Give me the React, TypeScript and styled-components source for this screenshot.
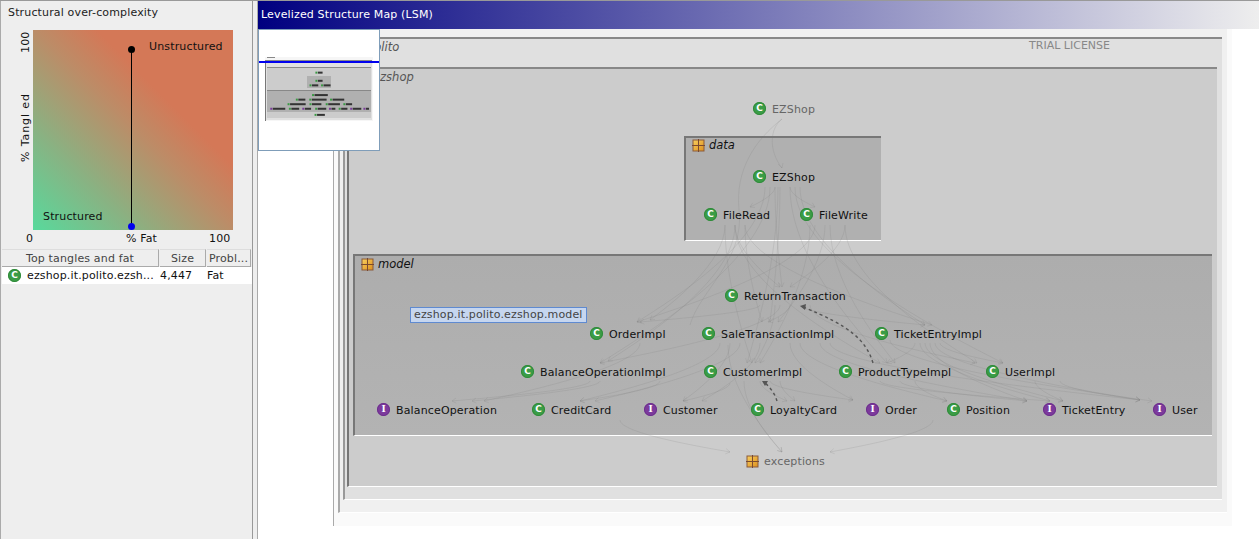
//----------------------------------------- Imports -----------------------------------------//
import React from 'react';
import styled, { createGlobalStyle } from 'styled-components';

//----------------------------------------- Data -----------------------------------------//
type Kind = 'C' | 'I';
type NodeItem = { name: string; kind: Kind; x: number; y: number };

const LOOSE: NodeItem[] = [{ name: 'EZShop', kind: 'C', x: 753, y: 109 }];

const DATA: NodeItem[] = [
  { name: 'EZShop', kind: 'C', x: 753, y: 177 },
  { name: 'FileRead', kind: 'C', x: 704, y: 215 },
  { name: 'FileWrite', kind: 'C', x: 800, y: 215 },
];

const MODEL: NodeItem[] = [
  { name: 'ReturnTransaction', kind: 'C', x: 725, y: 296 },
  { name: 'OrderImpl', kind: 'C', x: 590, y: 334 },
  { name: 'SaleTransactionImpl', kind: 'C', x: 702, y: 334 },
  { name: 'TicketEntryImpl', kind: 'C', x: 875, y: 334 },
  { name: 'BalanceOperationImpl', kind: 'C', x: 521, y: 372 },
  { name: 'CustomerImpl', kind: 'C', x: 704, y: 372 },
  { name: 'ProductTypeImpl', kind: 'C', x: 839, y: 372 },
  { name: 'UserImpl', kind: 'C', x: 986, y: 372 },
  { name: 'BalanceOperation', kind: 'I', x: 377, y: 410 },
  { name: 'CreditCard', kind: 'C', x: 532, y: 410 },
  { name: 'Customer', kind: 'I', x: 644, y: 410 },
  { name: 'LoyaltyCard', kind: 'C', x: 751, y: 410 },
  { name: 'Order', kind: 'I', x: 866, y: 410 },
  { name: 'Position', kind: 'C', x: 947, y: 410 },
  { name: 'TicketEntry', kind: 'I', x: 1043, y: 410 },
  { name: 'User', kind: 'I', x: 1153, y: 410 },
];

// sx, sy, tx, ty in page coordinates
const EDGES: number[][] = [
  [775, 187, 750, 207], [790, 187, 815, 207],
  [735, 225, 780, 287], [845, 225, 790, 287], [775, 187, 782, 287],
  [765, 187, 637, 322], [725, 225, 650, 320], [815, 225, 637, 322],
  [780, 187, 770, 322], [745, 225, 762, 322], [825, 225, 778, 322],
  [800, 187, 925, 325], [745, 225, 932, 325],
  [770, 187, 600, 363], [735, 225, 608, 361],
  [778, 187, 747, 363], [810, 225, 760, 363], [725, 225, 752, 363],
  [790, 187, 887, 363], [735, 225, 880, 363], [830, 225, 895, 363],
  [795, 187, 1003, 363], [845, 225, 977, 363],
  [760, 305, 640, 322], [790, 305, 768, 322], [800, 305, 925, 325],
  [780, 305, 600, 363], [775, 305, 755, 363], [810, 305, 975, 363],
  [720, 343, 580, 401], [740, 343, 595, 401], [730, 343, 683, 401], [760, 343, 702, 401],
  [790, 343, 853, 400], [800, 343, 947, 401], [820, 343, 1027, 401], [830, 343, 1140, 400],
  [640, 343, 484, 401], [590, 381, 452, 401], [600, 381, 472, 401],
  [660, 381, 580, 401], [730, 383, 683, 401], [760, 381, 787, 401], [770, 381, 853, 400],
  [925, 343, 1063, 401], [930, 343, 1027, 401], [920, 343, 1050, 401], [935, 343, 1140, 400],
  [940, 343, 1003, 363], [915, 343, 887, 363], [890, 340, 1152, 401],
  [900, 381, 1027, 401], [915, 381, 947, 401], [880, 381, 1050, 401],
  [1035, 381, 1063, 401], [1060, 381, 1140, 400], [780, 381, 795, 401],
  [620, 420, 730, 452], [933, 420, 830, 452], [728, 345, 782, 452], [744, 381, 782, 452],
];

const THUMB_NODES = [...LOOSE, ...DATA, ...MODEL, { name: 'exceptions', kind: 'C' as Kind, x: 746, y: 461 }];

//----------------------------------------- Component -----------------------------------------//
const Badge: React.FC<{ kind: Kind }> = ({ kind }) => <Bullet $kind={kind}>{kind}</Bullet>;

const PackageIcon: React.FC = () => (
  <svg width="13" height="13" viewBox="0 0 13 13">
    <defs>
      <linearGradient id="pkg" x1="0" y1="0" x2="1" y2="1">
        <stop offset="0" stopColor="#f8cf5e" />
        <stop offset="1" stopColor="#dd8f1e" />
      </linearGradient>
    </defs>
    <rect x="1" y="1" width="11" height="11" fill="url(#pkg)" stroke="#8a5a3a" strokeWidth="1" />
    <path d="M6.5 0V13M0 6.5H13" stroke="#7a4a30" strokeWidth="1" />
  </svg>
);

const ClassNode: React.FC<{ item: NodeItem; ox: number; oy: number; dim?: boolean }> = ({ item, ox, oy, dim }) => (
  <NodeBox $x={item.x - ox} $y={item.y - oy - 8} $dim={dim}>
    <Badge kind={item.kind} />
    {item.name}
  </NodeBox>
);

const Edge: React.FC<{ e: number[] }> = ({ e }) => {
  const [sx, sy, tx, ty] = e;
  const dy = ty - sy;
  const cx = tx + (sx - tx) * 0.3;
  const cy = ty - dy * 0.18;
  const a = Math.atan2(ty - cy, tx - cx);
  const p = (d: number) => `${tx - 5 * Math.cos(a + d)} ${ty - 5 * Math.sin(a + d)}`;
  return (
    <path d={`M${sx} ${sy}C${sx} ${sy + dy * 0.4} ${cx} ${cy} ${tx} ${ty}M${p(0.55)}L${tx} ${ty}L${p(-0.55)}`} />
  );
};

const EdgeLayer: React.FC = () => (
  <EdgeSvg viewBox="258 29 1001 510">
    <g fill="none" stroke="#787878" strokeOpacity="0.17" strokeWidth="1">
      {EDGES.map((e, i) => <Edge key={i} e={e} />)}
      <path d="M782 119C770 128 768 150 782 168M778 164L782 168L783 163" />
      <path d="M782 119C755 140 735 170 739 210C745 260 700 290 690 325" />
    </g>
    <g fill="none" stroke="#555" strokeWidth="1.4" strokeDasharray="3 3">
      <path d="M873 363C866 340 850 326 803 307" />
      <path d="M777 401C775 394 771 388 764 382" />
    </g>
    <g fill="#555">
      <path d="M800 306L806 304L805 310Z" />
      <path d="M762 381L768 381L765 386Z" />
    </g>
  </EdgeSvg>
);

const Thumbnail: React.FC = () => (
  <svg width="120" height="120" viewBox="259 30 120 120">
    <rect x="265" y="57" width="108" height="64" fill="#f6f6f6" />
    <rect x="265" y="60" width="107" height="60" fill="#e0e0e0" />
    <rect x="265" y="60" width="1" height="61" fill="#777" />
    <rect x="265" y="60" width="107" height="1" fill="#888" />
    <rect x="267" y="67" width="104" height="51" fill="#ccc" />
    <rect x="267" y="67" width="104" height="1" fill="#888" />
    <rect x="307" y="76" width="24" height="12" fill="#b0b0b0" />
    <rect x="267" y="90" width="104" height="22" fill="#b0b0b0" />
    <rect x="267" y="90" width="104" height="1" fill="#888" />
    {THUMB_NODES.map((n, i) => {
      const tx = 265 + (n.x - 333) * 0.12;
      const ty = 67.6 + (n.y - 67) * 0.12;
      return (
        <g key={i}>
          <rect x={tx} y={ty - 1} width="2" height="2" fill={n.kind === 'C' ? '#3a9a44' : '#7b3a9b'} />
          <rect x={tx + 2.5} y={ty - 1} width={n.name.length * 0.78} height="2" fill="#333" />
        </g>
      );
    })}
    <rect x="267" y="57" width="8" height="1" fill="#888" />
    <rect x="259" y="61" width="120" height="2" fill="#0000ee" />
  </svg>
);

const App: React.FC = () => (
  <Page>
    <GlobalStyle />
    <LeftPanel>
      <PanelTitle>Structural over-complexity</PanelTitle>
      <ChartRow>
        <YAxis>
          <YTitle>% Tangl ed</YTitle>
          <span>100</span>
        </YAxis>
        <Chart>
          <ChartNote $x={116} $y={10}>Unstructured</ChartNote>
          <ChartNote $x={10} $y={180}>Structured</ChartNote>
          <Stem />
          <Dot $y={19} $color="#000" />
          <Dot $y={196} $color="#0000ee" />
        </Chart>
      </ChartRow>
      <XAxis>
        <span>0</span>
        <span>% Fat</span>
        <span>100</span>
      </XAxis>
      <TableHead>
        <HeadCell>Top tangles and fat</HeadCell>
        <HeadCell>Size</HeadCell>
        <HeadCell>Probl...</HeadCell>
      </TableHead>
      <TableRow>
        <NameCell><Badge kind="C" />ezshop.it.polito.ezsh...</NameCell>
        <span>4,447</span>
        <span>Fat</span>
      </TableRow>
    </LeftPanel>
    <Gutter />
    <RightPanel>
      <TitleBar>Levelized Structure Map (LSM)</TitleBar>
      <Workspace>
        <Minimap><Thumbnail /></Minimap>
        <EdgeLayer />
        <FrameOne>
          <FrameTwo>
            <FrameThree>
              <FrameHeader>
                <PackageName $tight>
                  <PackageIcon />
                  polito
                </PackageName>
                <Trial>TRIAL LICENSE</Trial>
              </FrameHeader>
              <FrameFour>
                <PackageName $tight>
                  <PackageIcon />
                  ezshop
                </PackageName>
                {LOOSE.map(n => <ClassNode key={n.x} item={n} ox={349} oy={69} dim />)}
                <DataBox>
                  <PackageName $dark>
                    <PackageIcon />
                    data
                  </PackageName>
                  {DATA.map(n => <ClassNode key={n.x} item={n} ox={686} oy={138} />)}
                </DataBox>
                <ModelBox>
                  <PackageName $dark>
                    <PackageIcon />
                    model
                  </PackageName>
                  {MODEL.map(n => <ClassNode key={n.name} item={n} ox={355} oy={256} />)}
                  <Tooltip>ezshop.it.polito.ezshop.model</Tooltip>
                </ModelBox>
                <ExceptionsNode>
                  <PackageIcon />
                  exceptions
                </ExceptionsNode>
              </FrameFour>
            </FrameThree>
          </FrameTwo>
        </FrameOne>
      </Workspace>
    </RightPanel>
  </Page>
);

export default App;

//----------------------------------------- Style -----------------------------------------//
const GlobalStyle = createGlobalStyle`
  html, body { margin: 0; padding: 0; background: #fff; }
  * { box-sizing: border-box; }
`;

const Page = styled.div`
  display: flex;
  width: 1259px;
  height: 539px;
  overflow: hidden;
  border-top: 1px solid #999;
  font-family: "DejaVu Sans", sans-serif;
  font-size: 11px;
  letter-spacing: 0.15px;
  color: #111;
`;

const LeftPanel = styled.div`
  width: 253px;
  flex-shrink: 0;
  background: #eeeeee;
  border-left: 1px solid #aaa;
  border-right: 1px solid #999;
`;

const PanelTitle = styled.div`
  height: 29px;
  padding: 5px 0 0 7px;
  line-height: 13px;
  color: #222;
`;

const ChartRow = styled.div`
  display: flex;
`;

const YAxis = styled.div`
  width: 32px;
  height: 200px;
  display: flex;
  align-items: center;
  justify-content: flex-start;
  padding: 67px 16px 0 0;
  writing-mode: vertical-rl;
  transform: rotate(180deg);
`;

const YTitle = styled.span`
  margin-bottom: 40px;
  flex: 0 0 70px;
  text-align: center;
  letter-spacing: 0.9px;
`;

const Chart = styled.div`
  position: relative;
  width: 200px;
  height: 200px;
  background: linear-gradient(to top right, #58d99c 0%, #88b383 25%, #bb8d68 50%, #d47857 66%, #d47857 100%);
`;

const ChartNote = styled.span<{ $x: number; $y: number }>`
  position: absolute;
  left: ${p => p.$x}px;
  top: ${p => p.$y}px;
  line-height: 14px;
`;

const Stem = styled.div`
  position: absolute;
  left: 98px;
  top: 19px;
  width: 1px;
  height: 177px;
  background: #000;
`;

const Dot = styled.div<{ $y: number; $color: string }>`
  position: absolute;
  left: 95px;
  top: ${p => p.$y - 3}px;
  width: 7px;
  height: 7px;
  border-radius: 50%;
  background: ${p => p.$color};
`;

const XAxis = styled.div`
  display: grid;
  grid-template-columns: 100px 83px auto;
  height: 19px;
  padding: 2px 0 0 25px;
  line-height: 14px;
`;

const TableHead = styled.div`
  display: grid;
  grid-template-columns: 158px 47px 45px;
  height: 18px;
  margin-left: 1px;
`;

const HeadCell = styled.div`
  display: flex;
  align-items: center;
  justify-content: center;
  margin-right: 1px;
  background: #eeeeee;
  border-top: 1px solid #ddd;
  border-right: 1px solid #aaa;
  border-bottom: 1px solid #aaa;
  color: #444;
  white-space: nowrap;
  overflow: hidden;
`;

const TableRow = styled.div`
  display: grid;
  grid-template-columns: 158px 47px 45px;
  align-items: center;
  height: 17px;
  margin-left: 1px;
  background: #fff;
`;

const NameCell = styled.div`
  display: flex;
  align-items: center;
  gap: 6px;
  padding-left: 6px;
  white-space: nowrap;
  overflow: hidden;
`;

const Bullet = styled.span<{ $kind: Kind }>`
  display: inline-flex;
  flex: 0 0 13px;
  width: 13px;
  height: 13px;
  margin-top: -1px;
  align-items: center;
  justify-content: center;
  border-radius: 50%;
  background: ${p => (p.$kind === 'C' ? '#3b9c46' : '#7c3a9c')};
  box-shadow: inset 0 0 0 1px ${p => (p.$kind === 'C' ? '#2f8a3a' : '#6c2f8c')};
  color: #fff;
  letter-spacing: 0;
  font: bold 9px ${p => (p.$kind === 'C' ? '"DejaVu Sans"' : '"DejaVu Serif"')}, sans-serif;
  line-height: 13px;
`;

const Gutter = styled.div`
  width: 5px;
  flex-shrink: 0;
  background: #eeeeee;
  border-right: 1px solid #aaa;
`;

const RightPanel = styled.div`
  flex: 1;
  display: flex;
  flex-direction: column;
  min-width: 0;
`;

const TitleBar = styled.div`
  height: 28px;
  flex-shrink: 0;
  padding-left: 3px;
  line-height: 28px;
  color: #fff;
  background: linear-gradient(to right, #000080, #eeeeee);
`;

const Workspace = styled.div`
  position: relative;
  flex: 1;
  padding: 0 27px 14px 75px;
  background: #fff;
`;

const Minimap = styled.div`
  position: absolute;
  left: 0;
  top: 0;
  z-index: 4;
  width: 122px;
  height: 122px;
  background: #fff;
  border: 1px solid #7f9db9;
  overflow: hidden;

  svg { display: block; }
`;

const EdgeSvg = styled.svg`
  position: absolute;
  left: 0;
  top: 0;
  width: 1001px;
  height: 510px;
  z-index: 1;
  pointer-events: none;
`;

const FrameOne = styled.div`
  padding: 0 5px 13px 4px;
  background: #fafafa;
  border-left: 1px solid #aaa;
`;

const FrameTwo = styled.div`
  padding: 8px 5px 12px 3px;
  background: #f0f0f0;
  border-left: 2px solid #aaa;
  border-bottom: 1px solid #fff;
`;

const FrameThree = styled.div`
  padding: 0 5px 12px 2px;
  background: #e0e0e0;
  border-top: 2px solid #888;
  border-left: 2px solid #999;
  border-bottom: 1px solid #fff;
`;

const FrameHeader = styled.div`
  display: flex;
  justify-content: space-between;
  height: 28px;
  padding-right: 107px;
`;

const Trial = styled.span`
  line-height: 13px;
  letter-spacing: 0;
  color: #888;
`;

const PackageName = styled.div<{ $dark?: boolean; $tight?: boolean }>`
  display: flex;
  align-items: center;
  gap: 4px;
  height: 16px;
  padding-left: ${p => (p.$tight ? 3 : 6)}px;
  font-style: italic;
  font-size: 11.5px;
  letter-spacing: 0;
  color: ${p => (p.$dark ? '#111' : '#555')};
`;

const FrameFour = styled.div`
  position: relative;
  display: flex;
  flex-direction: column;
  padding: 0 5px 50px 4px;
  background: #cccccc;
  border-top: 2px solid #888;
  border-left: 2px solid #777;
  border-bottom: 1px solid #fff;
`;

const DataBox = styled.div`
  position: relative;
  align-self: center;
  width: 197px;
  height: 105px;
  margin-top: 51px;
  background: #b0b0b0;
  border-top: 2px solid #777;
  border-left: 2px solid #777;
  border-bottom: 1px solid #fff;

  > div:first-child { margin-top: -1px; }
`;

const ModelBox = styled.div`
  position: relative;
  height: 182px;
  margin-top: 13px;
  background: linear-gradient(to bottom, #adadad, #b3b3b3);
  border-top: 2px solid #777;
  border-left: 2px solid #777;
  border-bottom: 1px solid #fff;
`;

const NodeBox = styled.div<{ $x: number; $y: number; $dim?: boolean }>`
  position: absolute;
  left: ${p => p.$x}px;
  top: ${p => p.$y}px;
  z-index: 2;
  display: flex;
  align-items: center;
  gap: 6px;
  height: 16px;
  white-space: nowrap;
  color: ${p => (p.$dim ? '#666' : '#111')};
`;

const ExceptionsNode = styled.div`
  position: absolute;
  left: 397px;
  top: 384px;
  z-index: 2;
  display: flex;
  align-items: center;
  gap: 5px;
  height: 16px;
  color: #666;
`;

const Tooltip = styled.div`
  position: absolute;
  left: 55px;
  top: 51px;
  z-index: 3;
  height: 16px;
  padding: 0 3px;
  line-height: 14px;
  white-space: nowrap;
  color: #444;
  background: #c6d6ef;
  border: 1px solid #5f8ad0;
`;
